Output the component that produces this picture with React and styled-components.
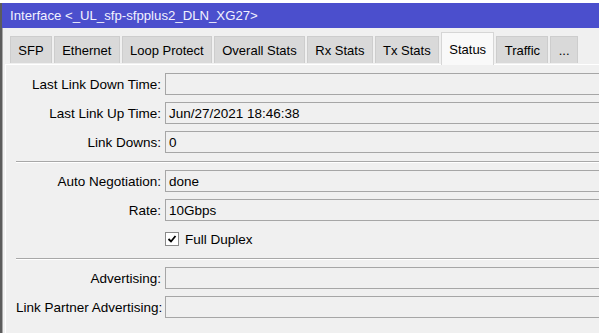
import styled, { createGlobalStyle } from "styled-components";

const Global = createGlobalStyle`
  html, body {
    margin: 0;
    padding: 0;
    background: #ffffff;
    overflow: hidden;
  }
  body {
    font-family: "Liberation Sans", Arial, sans-serif;
    font-size: 13px;
    color: #000;
  }
`;

const Window = styled.div`
  margin-top: 3px;
  width: 660px;
  height: 330px;
  background: #f0f0f0;
  border-left: 2px solid #5c5c5c;
  box-shadow: inset 1px 0 0 #a8a8a8;
  display: flex;
  flex-direction: column;
`;

const TitleBar = styled.div`
  height: 25px;
  background: #4b4fcd;
  color: #f2f2ff;
  display: flex;
  align-items: center;
  padding-left: 8px;
  font-size: 13.2px;
`;

const TabBar = styled.div`
  display: flex;
  align-items: flex-end;
  gap: 2px;
  height: 32px;
  margin-top: 4px;
  padding-left: 8px;
  position: relative;
  z-index: 1;
`;

const Tab = styled.div`
  height: ${(p) => (p.$active ? "33px" : "27px")};
  margin-bottom: ${(p) => (p.$active ? "-1px" : "1px")};
  box-sizing: border-box;
  padding: 0 7.3px;
  display: flex;
  align-items: center;
  background: ${(p) => (p.$active ? "#f9f9f9" : "#d9d9d9")};
  border: 1px solid ${(p) => (p.$active ? "#d6d6d6" : "#cdcdcd")};
  border-bottom: none;
`;

const Panel = styled.div`
  flex: 1;
  margin-left: 3px;
  border-top: 1px solid #ffffff;
  border-left: 1px solid #ffffff;
  padding: 8px 0 0 10px;
  display: flex;
  flex-direction: column;
  gap: 7px;
  font-size: 13.5px;
`;

const Row = styled.div`
  display: flex;
  align-items: center;
  height: 22px;
  gap: 4px;
`;

const Label = styled.div`
  width: 145px;
  text-align: right;
  white-space: nowrap;
`;

const Field = styled.div`
  flex: 1;
  height: 22px;
  box-sizing: border-box;
  border: 1px solid #a6a6a6;
  border-right: none;
  background: #f0f0f0;
  display: flex;
  align-items: center;
  padding-left: 3px;
  white-space: nowrap;
`;

const Separator = styled.div`
  height: 1px;
  margin-top: 1px;
  background: #a8a8a8;
  border-bottom: 1px solid #ffffff;
`;

const CheckWrap = styled.label`
  display: flex;
  align-items: center;
  gap: 6px;
  margin-left: 149px;
`;

const Box = styled.span`
  width: 14px;
  height: 14px;
  box-sizing: border-box;
  border: 1px solid #8a8a8a;
  background: #ffffff;
  display: flex;
  align-items: center;
  justify-content: center;
`;

const tabs = [
  "SFP",
  "Ethernet",
  "Loop Protect",
  "Overall Stats",
  "Rx Stats",
  "Tx Stats",
  "Status",
  "Traffic",
  "...",
];

function FieldRow({ label, value }) {
  return (
    <Row>
      <Label>{label}:</Label>
      <Field>{value}</Field>
    </Row>
  );
}

export default function App() {
  return (
    <>
      <Global />
      <Window>
        <TitleBar>Interface &lt;_UL_sfp-sfpplus2_DLN_XG27&gt;</TitleBar>
        <TabBar>
          {tabs.map((t) => (
            <Tab key={t} $active={t === "Status"}>
              {t}
            </Tab>
          ))}
        </TabBar>
        <Panel>
          <FieldRow label="Last Link Down Time" value="" />
          <FieldRow label="Last Link Up Time" value="Jun/27/2021 18:46:38" />
          <FieldRow label="Link Downs" value="0" />
          <Separator />
          <FieldRow label="Auto Negotiation" value="done" />
          <FieldRow label="Rate" value="10Gbps" />
          <Row>
            <CheckWrap>
              <Box>
                <svg width="10" height="10" viewBox="0 0 10 10">
                  <path d="M1.5 5 L4 7.5 L8.5 2" fill="none" stroke="#000" strokeWidth="1.8" />
                </svg>
              </Box>
              Full Duplex
            </CheckWrap>
          </Row>
          <Separator />
          <FieldRow label="Advertising" value="" />
          <FieldRow label="Link Partner Advertising" value="" />
        </Panel>
      </Window>
    </>
  );
}
